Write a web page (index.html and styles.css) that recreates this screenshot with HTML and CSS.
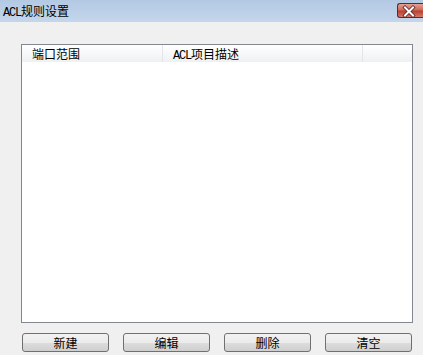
FILE: index.html
```html
<!DOCTYPE html>
<html lang="zh-CN">
<head>
	<meta charset="UTF-8">
	<title>ACL规则设置</title>
	<link rel="stylesheet" href="styles.css">
</head>
<body>
	<div class="dialog">
		<div class="titlebar">
			<span class="title"><span class="en">ACL</span>规则设置</span>
			<div class="close">
				<svg width="22" height="15" viewBox="0 0 22 15">
					<path d="M7 3.5 L15 11.5 M15 3.5 L7 11.5" stroke="#5b2020" stroke-width="3.6" stroke-linecap="square"/>
					<path d="M7 3.5 L15 11.5 M15 3.5 L7 11.5" stroke="#ffffff" stroke-width="2" stroke-linecap="square"/>
				</svg>
			</div>
		</div>
		<div class="content">
			<div class="list">
				<div class="list_head">
					<div class="col col1">端口范围</div>
					<div class="col col2"><span class="en">ACL</span>项目描述</div>
					<div class="col col3"></div>
				</div>
			</div>
			<div class="buttons">
				<button class="btn">新建</button>
				<button class="btn">编辑</button>
				<button class="btn">删除</button>
				<button class="btn">清空</button>
			</div>
		</div>
	</div>
</body>
</html>
```

FILE: styles.css
```css
*{
	margin: 0;
	padding: 0;
	box-sizing: border-box;
}
body{
	width: 423px;
	height: 355px;
	overflow: hidden;
	background: #f0f0f0;
	font-family: "Noto Sans CJK SC", sans-serif;
	font-size: 12px;
	color: #000;
}
.en{
	font-family: "Liberation Mono", monospace;
	letter-spacing: -1.2px;
}
.dialog{
	display: flex;
	flex-direction: column;
	height: 355px;
}
.titlebar{
	height: 22px;
	display: flex;
	align-items: flex-start;
	justify-content: space-between;
	background: linear-gradient(#b3c9e3, #c4d6eb);
}
.title{
	line-height: 22px;
	padding-left: 3px;
}
.close{
	margin-top: 3px;
	width: 26px;
	height: 15px;
	border: 1px solid #5e2a2a;
	border-right: none;
	border-radius: 3px 0 0 3px;
	background: linear-gradient(#e3a294, #cf6a5a 45%, #b9402f 55%, #d3796a);
}
.close svg{
	display: block;
}
.content{
	padding: 22px 10px 0 21px;
}
.list{
	height: 279px;
	border: 1px solid #828790;
	background: #fff;
}
.list_head{
	display: flex;
	height: 17px;
	background: linear-gradient(#ffffff, #f7f8f9 50%, #eef0f2);
}
.col{
	line-height: 17px;
	border-right: 1px solid #e3e5e8;
}
.col1{
	width: 141px;
	padding-left: 10px;
}
.col2{
	width: 200px;
	padding-left: 10px;
}
.col3{
	width: 49px;
	border-right: none;
}
.buttons{
	display: flex;
	justify-content: space-between;
	margin-top: 10px;
	padding: 0 1px 0 1px;
}
.btn{
	width: 87px;
	height: 19px;
	border: 1px solid #707070;
	border-radius: 3px;
	background: linear-gradient(#f2f2f2, #ebebeb 50%, #dddddd 51%, #cfcfcf);
	font-family: "Noto Sans CJK SC", sans-serif;
	font-size: 12px;
	line-height: 17px;
	color: #000;
}
```
